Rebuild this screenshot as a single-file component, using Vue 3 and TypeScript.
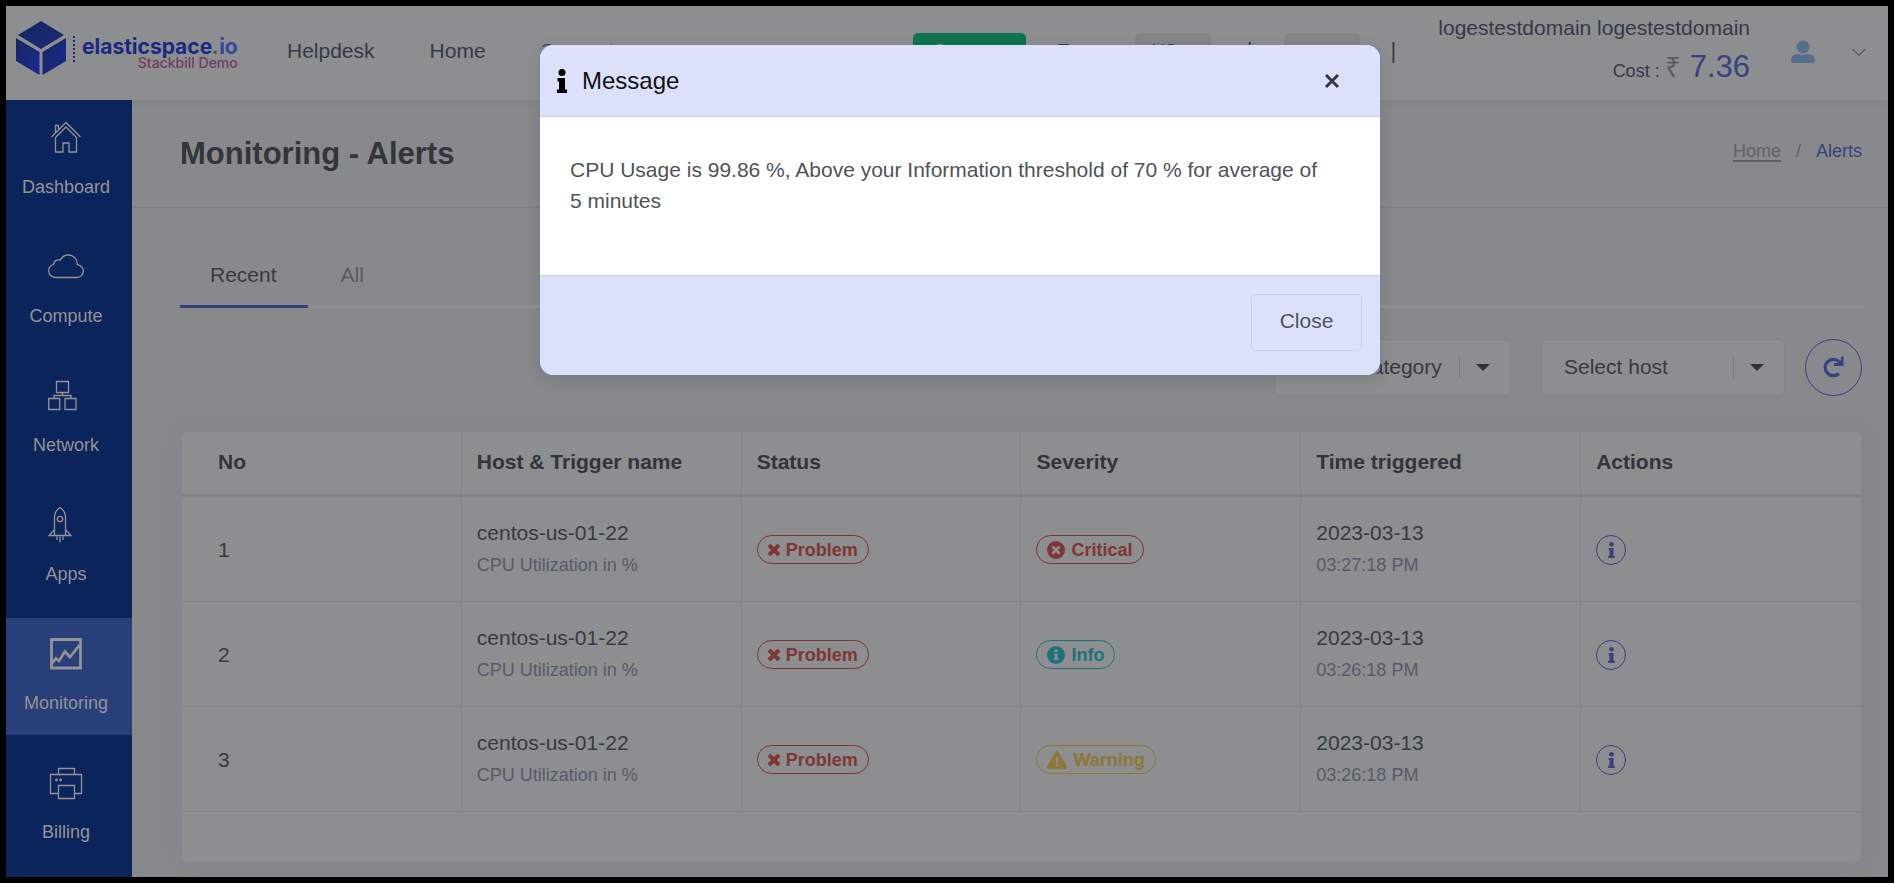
<script setup lang="ts">
import { ref } from 'vue'

interface NavItem {
  label: string
  icon: string
}
interface AlertRow {
  no: number
  host: string
  trigger: string
  severity: 'Critical' | 'Info' | 'Warning'
  date: string
  time: string
}

const navItems: NavItem[] = [
  { label: 'Dashboard', icon: 'home' },
  { label: 'Compute', icon: 'cloud' },
  { label: 'Network', icon: 'network' },
  { label: 'Apps', icon: 'rocket' },
  { label: 'Monitoring', icon: 'chart' },
  { label: 'Billing', icon: 'printer' },
]
const activeItem = ref('Monitoring')

const columns = ['No', 'Host & Trigger name', 'Status', 'Severity', 'Time triggered', 'Actions']
const alerts: AlertRow[] = [
  { no: 1, host: 'centos-us-01-22', trigger: 'CPU Utilization in %', severity: 'Critical', date: '2023-03-13', time: '03:27:18 PM' },
  { no: 2, host: 'centos-us-01-22', trigger: 'CPU Utilization in %', severity: 'Info', date: '2023-03-13', time: '03:26:18 PM' },
  { no: 3, host: 'centos-us-01-22', trigger: 'CPU Utilization in %', severity: 'Warning', date: '2023-03-13', time: '03:26:18 PM' },
]
const modalOpen = ref(true)
</script>

<template>
  <div class="frame">
    <header class="topbar">
      <a class="logo" href="#" aria-label="elasticspace.io">
        <svg class="cube" viewBox="0 0 52 54" width="52" height="54" aria-hidden="true">
          <defs>
            <linearGradient id="cubeTop" x1="0" y1="0" x2="1" y2="1">
              <stop offset="0" stop-color="#122560" />
              <stop offset="1" stop-color="#1c2a78" />
            </linearGradient>
            <linearGradient id="cubeSide" x1="0" y1="0" x2="1" y2="1">
              <stop offset="0" stop-color="#162660" />
              <stop offset="1" stop-color="#1a2a90" />
            </linearGradient>
          </defs>
          <path d="M26 0 49 14 26 28 3 14Z" fill="url(#cubeTop)" />
          <path d="M1 17 24.500 31V54L1 40Z" fill="url(#cubeSide)" />
          <path d="M51 17 27.500 31V54L51 40Z" fill="url(#cubeSide)" />
        </svg>
        <span class="dots"></span>
        <span class="wordmark">
          <strong>elasticspace<i>.</i><em>io</em></strong>
          <small>Stackbill Demo</small>
        </span>
      </a>
      <nav class="links">
        <a href="#">Helpdesk</a>
        <a href="#">Home</a>
        <a href="#">Support</a>
      </nav>
      <div class="tools">
        <button class="create" type="button">Create <span class="caret light"></span></button>
        <label class="zone" for="zone">Zone</label>
        <select id="zone" class="pill"><option>US</option></select>
        <span class="bar first">|</span>
        <button class="pill" type="button" aria-label="Language"></button>
        <span class="bar">|</span>
      </div>
      <div class="account">
        <span class="name">logestestdomain logestestdomain</span>
        <span class="cost">Cost : <span class="rupee">₹</span> <b>7.36</b></span>
      </div>
      <button class="user" type="button" aria-label="Account">
        <svg viewBox="0 0 24 24" width="24" height="24"><circle cx="12" cy="7" r="6.500" /><path d="M0 21c0-5 3-7 7-7 2 0 3 .8 5 .8s3-.8 5-.8c4 0 7 2 7 7 0 1.500-.8 2-2 2H2c-1.200 0-2-.5-2-2Z" /></svg>
        <svg class="chev" viewBox="0 0 14 9" width="14" height="9"><path d="M.7 1 7 7.500 13.300 1" /></svg>
      </button>
    </header>

    <nav class="sidebar">
      <a v-for="item in navItems" :key="item.label" href="#" class="item" :class="{ active: item.label === activeItem }" @click.prevent="activeItem = item.label">
        <svg v-if="item.icon === 'home'" viewBox="0 0 36 36" width="36" height="36">
          <path d="M3.500 17 18 2.500 32.500 17M7.500 12.500V5.500h3v4M7.500 17.500 18 7 28.500 17.500V32h-7.500V23h-6v9H7.500V17.500" />
        </svg>
        <svg v-else-if="item.icon === 'cloud'" viewBox="0 0 36 36" width="36" height="36">
          <path d="M7.500 28.500C3.500 28.500.7 25.500.7 21.800c0-3 2-5.500 4.800-6.300.3-3.500 3.500-5.500 6.800-4.300C13.800 8 17 6 20.300 6c5 0 9 4 9 9v.6c3.500.7 6 3.200 6 6.400 0 3.600-2.800 6.500-6.500 6.500Z" />
        </svg>
        <svg v-else-if="item.icon === 'network'" viewBox="0 0 36 36" width="36" height="36">
          <path d="M8.500 3.500h12v11h-12ZM.7 20.500h11v11H.7ZM17 20.500h11v11H17ZM14.500 14.500v3M6 20.500v-3h17v3" />
        </svg>
        <svg v-else-if="item.icon === 'rocket'" viewBox="0 0 36 36" width="36" height="36">
          <path d="M6.500 28.500V10c0-4 2.500-7.500 5.500-9.500 3 2 5.500 5.500 5.500 9.500v18.500ZM6.500 22.500 1 28.500h22l-5.500-6M12 29.500v6M9 29.500v3.500M15 29.500v3.500" />
          <circle cx="12" cy="12" r="2.700" />
        </svg>
        <svg v-else-if="item.icon === 'chart'" viewBox="0 0 36 36" width="36" height="36" class="bold">
          <path d="M3.500 3.500h29v28.500h-29ZM3 28l5-5.500 3 2.500 6-9.500 5 5.500L31.500 9" />
        </svg>
        <svg v-else viewBox="0 0 36 36" width="36" height="36">
          <path d="M10.500 9.500V3.500h16v6M10.500 28.500h-8V9.500h31v19h-7M10.500 20.500h16v13h-16Z" />
          <circle cx="8.500" cy="15" r=".8" /><circle cx="12.500" cy="15" r=".8" />
        </svg>
        <span>{{ item.label }}</span>
      </a>
    </nav>

    <main class="page">
      <div class="heading">
        <h1>Monitoring - Alerts</h1>
        <nav class="crumbs"><a href="#">Home</a><span>/</span><b>Alerts</b></nav>
      </div>
      <div class="content">
        <div class="tabs" role="tablist">
          <button type="button" role="tab" class="tab on" aria-selected="true">Recent</button>
          <button type="button" role="tab" class="tab">All</button>
        </div>
        <div class="filters">
          <div class="picker cat">
            <select aria-label="Category"><option>Select category</option></select>
            <span class="divider"></span><span class="caret"></span>
          </div>
          <div class="picker">
            <select aria-label="Host"><option>Select host</option></select>
            <span class="divider"></span><span class="caret"></span>
          </div>
          <button class="refresh" type="button" aria-label="Refresh">
            <svg viewBox="0 0 22 22" width="22" height="22"><path d="M17 17.500A8.200 8.200 0 1 1 17.500 6" /><path class="fill" d="M21.500 .5V10H12V7h4L19 4V.5Z" /></svg>
          </button>
        </div>
        <section class="card">
          <table>
            <thead>
              <tr><th v-for="c in columns" :key="c" scope="col">{{ c }}</th></tr>
            </thead>
            <tbody>
              <tr v-for="a in alerts" :key="a.no">
                <td>{{ a.no }}</td>
                <td>{{ a.host }}<small>{{ a.trigger }}</small></td>
                <td>
                  <span class="badge problem">
                    <svg viewBox="0 0 14 14" width="14" height="14"><path class="cross" d="m2 2 10 10M12 2 2 12" /></svg>Problem
                  </span>
                </td>
                <td>
                  <span class="badge" :class="a.severity.toLowerCase()">
                    <svg v-if="a.severity === 'Critical'" viewBox="0 0 18 18" width="18" height="18"><circle cx="9" cy="9" r="9" /><path class="knock" d="m5.500 5.500 7 7M12.500 5.500l-7 7" /></svg>
                    <svg v-else-if="a.severity === 'Info'" viewBox="0 0 18 18" width="18" height="18"><circle cx="9" cy="9" r="9" /><path class="hole" d="M7.500 3.500h3v2.500h-3ZM7 7.500h3.500v4.500h1v1.800h-4.700V12h1V9.200H7Z" /></svg>
                    <svg v-else viewBox="0 0 20 18" width="20" height="18"><path d="M8.600.8c.6-1 2.200-1 2.800 0l8.300 14.600c.6 1.100-.2 2.600-1.500 2.600H1.800C.5 18-.3 16.500.3 15.400Z" /><path class="hole" d="M8.600 6h2.800l-.4 5.500H9ZM8.700 12.800h2.600v2.600H8.700Z" /></svg>
                    {{ a.severity }}
                  </span>
                </td>
                <td>{{ a.date }}<small>{{ a.time }}</small></td>
                <td>
                  <button class="info" type="button" aria-label="Details" @click="modalOpen = true">
                    <svg viewBox="0 0 10 24" width="7" height="16"><circle cx="5" cy="3.500" r="3.500" /><path d="M.8 9H8v11.500h2V24H0v-3.500h2v-8H.8Z" /></svg>
                  </button>
                </td>
              </tr>
            </tbody>
          </table>
        </section>
      </div>
    </main>

    <div v-if="modalOpen" class="overlay">
      <div class="modal" role="dialog" aria-modal="true" aria-labelledby="modalTitle">
        <div class="dialog">
          <div class="modal-head">
            <svg viewBox="0 0 10 24" width="10" height="24"><circle cx="5" cy="3.500" r="3.500" /><path d="M.5 9H8v11.500h2V24H0v-3.500h2v-8H.5Z" /></svg>
            <h2 id="modalTitle">Message</h2>
            <button type="button" aria-label="Dismiss" @click="modalOpen = false">
              <svg viewBox="0 0 16 16" width="16" height="16"><path d="m2 2 12 12M14 2 2 14" /></svg>
            </button>
          </div>
          <p class="modal-body">CPU Usage is 99.86 %, Above your Information threshold of 70 % for average of 5 minutes</p>
          <div class="modal-foot">
            <button type="button" @click="modalOpen = false">Close</button>
          </div>
        </div>
      </div>
    </div>
  </div>
</template>

<style>
body {
  margin: 0;
  background: #000;
}
</style>

<style scoped>
* {
  box-sizing: border-box;
}
.frame {
  position: relative;
  display: grid;
  grid-template-columns: 126px minmax(0, 1fr);
  grid-template-rows: 94px 1fr;
  min-height: 100vh;
  border: 6px solid #000;
  background: #88898d;
  color: #383b40;
  font: 21px/28px "Liberation Sans", Arial, sans-serif;
}
a {
  color: inherit;
  text-decoration: none;
}
button,
select {
  margin: 0;
  padding: 0;
  border: 0;
  background: none;
  color: inherit;
  font: inherit;
}
select {
  appearance: none;
}
svg {
  flex: none;
}

.topbar {
  grid-column: 1 / -1;
  display: flex;
  align-items: center;
  background: #8d8e8f;
  box-shadow: 0 2px 8px rgba(60, 62, 80, 0.06);
  white-space: nowrap;
  z-index: 1;
}
.logo {
  display: flex;
  align-items: center;
  width: 281px;
  padding: 0 0 10px 9px;
}
.dots {
  height: 26px;
  margin: 2px 7px 0 6px;
  border-left: 2px dotted #252c66;
}
.wordmark {
  display: flex;
  flex-direction: column;
  align-items: flex-end;
  margin-top: 12px;
  color: #1b2983;
  font-family: Inter, sans-serif;
}
.wordmark strong {
  font-size: 21px;
  line-height: 18px;
}
.wordmark i {
  color: #5c5460;
}
.wordmark em {
  color: #3346a0;
  font-style: normal;
}
.wordmark small {
  color: #733b62;
  font-size: 14px;
  font-weight: 500;
  line-height: 14px;
}
.links {
  display: flex;
  gap: 55px;
  padding-bottom: 4px;
}
.links,
.tools,
.name,
.cost {
  color: #343b48;
}
.tools {
  display: flex;
  align-items: center;
  margin: 0 0 2px auto;
}
.create {
  width: 113px;
  height: 38px;
  padding-bottom: 3px;
  border-radius: 5px;
  background: #0e734e;
  color: #8f9690;
  font-size: 18px;
}
.zone,
.bar {
  padding-bottom: 3px;
}
.zone {
  margin: 0 30px 0 31px;
}
.pill {
  width: 76px;
  height: 38px;
  padding: 0 0 3px 17px;
  border-radius: 6px;
  background: #848587;
  font-size: 18px;
}
.bar {
  margin-left: 31px;
  font-size: 22px;
}
.bar.first {
  margin: 0 31px 0 36px;
}
.account {
  display: flex;
  flex-direction: column;
  align-items: flex-end;
  margin: 0 41px 0 42px;
}
.name {
  line-height: 30px;
}
.cost {
  padding-top: 2px;
  font-size: 18px;
  line-height: 44px;
}
.cost b {
  color: #37427f;
  font-size: 31px;
  font-weight: 400;
}
.rupee {
  margin-right: 4px;
  color: #5d5e61;
  font-size: 28px;
}
.user {
  display: flex;
  align-items: center;
  gap: 37px;
  margin: 0 22px 2px 0;
  fill: #54708a;
}
.chev {
  fill: none;
  stroke: #383b40;
}

.sidebar {
  display: flex;
  flex-direction: column;
  gap: 12px;
  padding-top: 2px;
  background: #0c245c;
  color: #929395;
  font-size: 18px;
}
.item {
  display: flex;
  flex-direction: column;
  align-items: center;
  gap: 19px;
  height: 117px;
  padding: 18px 6px 0 0;
  line-height: 24px;
}
.item svg {
  fill: none;
  stroke: currentColor;
  stroke-width: 1.3;
}
.item svg.bold {
  stroke-width: 2.8;
}
.item.active {
  background: #283f7a;
}

.page {
  min-width: 0;
}
.heading {
  display: flex;
  align-items: center;
  justify-content: space-between;
  height: 108px;
  padding: 0 26px 0 48px;
  border-bottom: 1px solid #808185;
}
h1 {
  margin: 0;
  color: #323639;
  font-size: 31px;
  line-height: 40px;
}
.crumbs {
  display: flex;
  gap: 15px;
  padding-bottom: 5px;
  color: #616266;
  font-size: 18px;
}
.crumbs a {
  text-decoration: underline;
  text-decoration-thickness: 2px;
  text-underline-offset: 3px;
}
.crumbs b {
  color: #37427f;
  font-weight: 400;
}
.content {
  padding: 36px 25px 15px 48px;
}
.tabs {
  display: flex;
  gap: 3px;
  border-bottom: 3px solid #8e8f90;
}
.tab {
  height: 64px;
  margin-bottom: -3px;
  padding: 0 31px 0 30px;
  border-bottom: 3px solid transparent;
  color: #5a5b5f;
}
.tab.on {
  border-color: #364180;
  color: #383b40;
}
.filters {
  display: flex;
  justify-content: flex-end;
  gap: 20px;
  margin: 31px 1px 36px 0;
}
.picker {
  position: relative;
  width: 244px;
  height: 57px;
}
.picker.cat {
  width: 237px;
  margin-right: 10px;
}
.picker select {
  width: 100%;
  height: 100%;
  padding: 0 0 2px 22px;
  border: 1px solid #828385;
  border-radius: 5px;
  background: #8d8e8f;
}
.divider {
  position: absolute;
  top: 18px;
  right: 51px;
  width: 1px;
  height: 21px;
  background: #7a7b7d;
}
.caret {
  position: absolute;
  top: 25px;
  right: 21px;
  border: solid transparent;
  border-width: 7px 7px 0;
  border-top-color: #303336;
}
.caret.light {
  position: static;
  display: inline-block;
  margin-left: 4px;
  border-width: 5px 5px 0;
  border-top-color: #8f9690;
}
.refresh {
  display: grid;
  place-items: center;
  width: 57px;
  height: 57px;
  padding: 0 2px 2px 0;
  border: 1px solid #37427f;
  border-radius: 50%;
}
.refresh path {
  fill: none;
  stroke: #37427f;
  stroke-width: 3.2;
}
.refresh .fill {
  fill: #37427f;
  stroke: none;
}

.card {
  min-height: 430px;
  margin: 0 2px;
  border-radius: 5px;
  background: #8d8e8f;
  box-shadow: 0 0 30px 4px rgba(60, 62, 90, 0.05);
}
table {
  width: 100%;
  table-layout: fixed;
  border-collapse: separate;
  border-spacing: 0;
}
th,
td {
  padding: 0 15px;
  border-right: 1px solid #838486;
  text-align: left;
}
th:last-child,
td:last-child {
  border-right: 0;
}
th:first-child,
td:first-child {
  padding-left: 36px;
}
th {
  height: 65px;
  padding-bottom: 3px;
  border-bottom: 3px solid #838486;
  color: #323539;
}
td {
  height: 105px;
  padding-top: 1px;
  border-bottom: 1px solid #838486;
}
td small {
  display: block;
  padding: 2px 0 0;
  color: #535d69;
  font-size: 18px;
  line-height: 32px;
}
.badge {
  display: inline-flex;
  align-items: center;
  gap: 6px;
  height: 29px;
  padding: 0 10px;
  border: 1px solid;
  border-radius: 15px;
  font-size: 18px;
  font-weight: 700;
  vertical-align: middle;
  fill: currentColor;
}
.badge.problem {
  gap: 5px;
  padding-left: 9px;
}
.problem,
.critical {
  color: #7e3636;
}
.badge.info {
  color: #1e727c;
}
.warning {
  color: #8c7736;
}
.cross {
  stroke: currentColor;
  stroke-width: 4;
}
.knock {
  stroke: #8d8e8f;
  stroke-width: 2.6;
}
.hole {
  fill: #8d8e8f;
}
button.info {
  display: grid;
  place-items: center;
  width: 30px;
  height: 30px;
  border: 1px solid #37427f;
  border-radius: 50%;
  fill: #37427f;
}

.overlay {
  position: absolute;
  inset: 0;
  z-index: 2;
  padding: 39px 0 0 26px;
}
.modal {
  width: 840px;
  max-width: 100%;
  margin: 0 auto;
  border-radius: 8px;
  background: #7a83a4;
  box-shadow: 0 5px 16px rgba(0, 0, 0, 0.12);
}
.dialog {
  overflow: hidden;
  border-radius: 14px;
  background: #fff;
}
.modal-head,
.modal-foot {
  display: flex;
  align-items: center;
  background: #dde0fb;
}
.modal-head {
  gap: 15px;
  height: 72px;
  padding: 0 40px 0 17px;
  border-bottom: 1px solid #c9cee8;
}
.modal-head h2 {
  flex: 1;
  margin: 0;
  color: #111214;
  font-size: 24px;
  font-weight: 400;
}
.modal-head button {
  display: grid;
  stroke: #37383f;
  stroke-width: 3;
}
.modal-body {
  margin: 0;
  min-height: 158px;
  padding: 37px 46px 37px 30px;
  color: #4f5358;
  line-height: 31px;
}
.modal-foot {
  justify-content: flex-end;
  height: 100px;
  padding: 0 18px 6px;
  border-top: 1px solid #c9cee8;
}
.modal-foot button {
  width: 111px;
  height: 57px;
  padding-bottom: 3px;
  border: 1px solid #ccd0e6;
  border-radius: 5px;
  color: #4f545b;
}
</style>
